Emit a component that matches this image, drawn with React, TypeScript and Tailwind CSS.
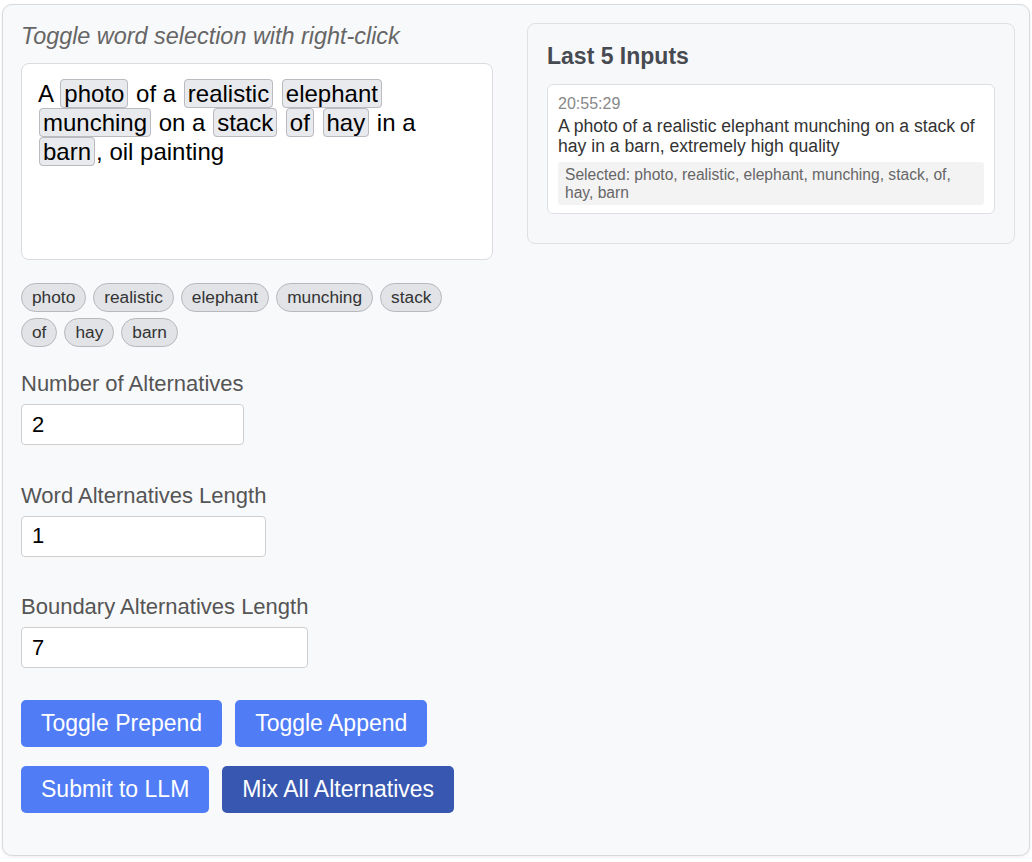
import React from 'react';

const selected = ['photo', 'realistic', 'elephant', 'munching', 'stack', 'of', 'hay', 'barn'];

const Word = ({ children }: { children: React.ReactNode }) => (
  <span className="mx-px rounded-[4px] border border-[#babbc0] bg-[#e9eaee] px-[3px]">{children}</span>
);

const Field = ({ label, value }: { label: string; value: string }) => (
  <div className="flex w-fit flex-col">
    <label className="text-[22px] leading-[26px] text-[#555]">{label}</label>
    <input
      readOnly
      size={1}
      value={value}
      className="mt-[7px] h-[41px] w-0 min-w-full rounded-[4px] border border-[#cfcfcf] bg-white px-[10px] text-[22px] text-black outline-none"
    />
  </div>
);

const App = () => {
  return (
    <div className="min-h-screen bg-white pl-[2px] pt-[4px] font-['Liberation_Sans',Arial,sans-serif]">
      <div className="flex h-[852px] w-[1028px] gap-[34px] rounded-[10px] border border-[#d8d9dc] bg-[#f8f9fb] pl-[18px] pt-[18px] shadow-[0_1px_3px_rgba(0,0,0,0.08)]">
        {/* left column */}
        <div className="flex w-[472px] flex-col">
          <p className="text-[23.4px] italic leading-[26px] text-[#666]">Toggle word selection with right-click</p>

          <div className="mt-[14px] h-[197px] rounded-[8px] border border-[#dcdcdf] bg-white px-[16px] pt-[15px] text-[24px] leading-[29px] text-black">
            A <Word>photo</Word> of a <Word>realistic</Word> <Word>elephant</Word> <Word>munching</Word> on a{' '}
            <Word>stack</Word> <Word>of</Word> <Word>hay</Word> in a <Word>barn</Word>, oil painting
          </div>

          <div className="mt-[23px] flex w-[450px] flex-wrap gap-x-[7px] gap-y-[6px]">
            {selected.map((w) => (
              <span
                key={w}
                className="flex h-[29px] items-center rounded-full border border-[#b6b8bc] bg-[#e1e3e7] px-[10px] text-[17.3px] text-[#333]"
              >
                {w}
              </span>
            ))}
          </div>

          <div className="mt-[24px] flex flex-col gap-[37.5px]">
            <Field label="Number of Alternatives" value="2" />
            <Field label="Word Alternatives Length" value="1" />
            <Field label="Boundary Alternatives Length" value="7" />
          </div>

          <div className="mt-[32px] flex gap-[13px]">
            <button className="rounded-[5px] bg-[#507cf6] px-[20px] py-[10px] text-[23px] leading-[27px] text-white">
              Toggle Prepend
            </button>
            <button className="rounded-[5px] bg-[#507cf6] px-[20px] py-[10px] text-[23px] leading-[27px] text-white">
              Toggle Append
            </button>
          </div>
          <div className="mt-[19px] flex gap-[13px]">
            <button className="rounded-[5px] bg-[#507cf6] px-[20px] py-[10px] text-[23px] leading-[27px] text-white">
              Submit to LLM
            </button>
            <button className="rounded-[5px] bg-[#3757b1] px-[20px] py-[10px] text-[23px] leading-[27px] text-white">
              Mix All Alternatives
            </button>
          </div>
        </div>

        {/* right column: history */}
        <div className="h-[221px] w-[488px] rounded-[8px] border border-[#e0e1e4] bg-[#f7f8fa] px-[19px] pt-[19px]">
          <h3 className="text-[23px] font-bold leading-[27px] text-[#474b51]">Last 5 Inputs</h3>
          <div className="mt-[14px] rounded-[6px] border border-[#dedfe2] bg-white px-[10px] pb-[8px] pt-[10px]">
            <div className="text-[16px] leading-[18px] text-[#888]">20:55:29</div>
            <div className="mt-[3px] text-[17.6px] leading-[20px] text-[#333]">
              A photo of a realistic elephant munching on a stack of hay in a barn, extremely high quality
            </div>
            <div className="mt-[6px] rounded-[3px] bg-[#f3f3f4] px-[7px] py-[3.5px] text-[15.6px] leading-[18px] text-[#666]">
              Selected: photo, realistic, elephant, munching, stack, of, hay, barn
            </div>
          </div>
        </div>
      </div>
    </div>
  );
};

export default App;
